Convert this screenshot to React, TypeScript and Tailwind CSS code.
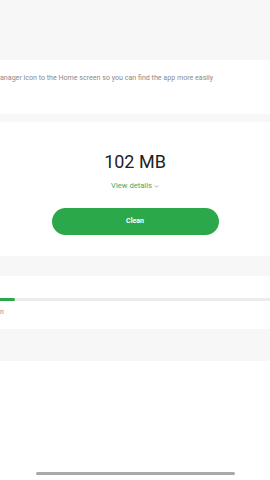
import React from "react";

const App = () => {
  return (
    <div className="flex h-[480px] w-[270px] flex-col overflow-hidden bg-white font-['Roboto','Liberation_Sans',sans-serif]">
      {/* top header area */}
      <div className="h-[60px] bg-[#f7f7f7]" />

      {/* shortcut tip */}
      <div className="flex h-[54px] flex-col bg-white pt-[14px]">
        <p className="whitespace-nowrap text-[7.1px] leading-[8px] text-[#8a8a8a]">
          anager icon to the Home screen so you can find the app more easily
        </p>
      </div>
      <div className="h-[8px] bg-[#f7f7f7]" />

      {/* junk card */}
      <div className="flex h-[134px] flex-col items-center bg-white pt-[29px]">
        <p className="text-[18px] leading-[22px] text-[#222]">102 MB</p>
        <button className="mt-[8px] flex items-center gap-[2px] text-[7.6px] leading-[10px] text-[#3fa95c]">
          View details
          <svg width="5" height="5" viewBox="0 0 10 10" fill="none">
            <path d="M2 3.5 5 6.5 8 3.5" stroke="#3fa95c" strokeWidth="1.3" strokeLinecap="round" strokeLinejoin="round" />
          </svg>
        </button>
        <button className="mt-[17px] flex h-[27px] w-[167px] items-center justify-center rounded-full bg-[#2aa84a] text-[7px] font-bold text-white">
          Clean
        </button>
      </div>
      <div className="h-[20px] bg-[#f7f7f7]" />

      {/* storage */}
      <div className="flex h-[53px] flex-col bg-white pt-[22px]">
        <div className="h-[3px] w-full bg-[#ececec]">
          <div className="h-full w-[15px] rounded-r-full bg-[#2aa84a]" />
        </div>
        <span className="mt-[7px] text-[6.6px] leading-[8px] text-[#8a8a8a]">n</span>
      </div>
      <div className="h-[32px] bg-[#f7f7f7]" />

      {/* bottom */}
      <div className="flex flex-1 flex-col items-center justify-end bg-white pb-[5px]">
        <div className="h-[3px] w-[199px] rounded-full bg-[#a9a9a9]" />
      </div>
    </div>
  );
};

export default App;
